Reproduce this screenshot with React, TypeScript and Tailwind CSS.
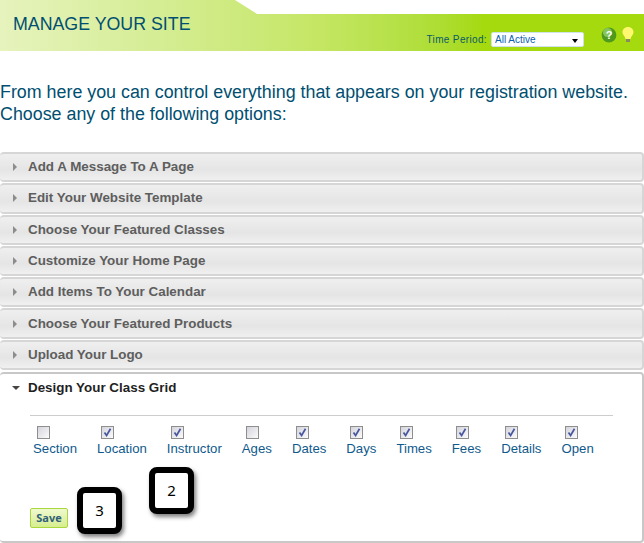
const sections = [
  "Add A Message To A Page",
  "Edit Your Website Template",
  "Choose Your Featured Classes",
  "Customize Your Home Page",
  "Add Items To Your Calendar",
  "Choose Your Featured Products",
  "Upload Your Logo",
]

const columns = [
  { name: "Section", on: false },
  { name: "Location", on: true },
  { name: "Instructor", on: true },
  { name: "Ages", on: false },
  { name: "Dates", on: true },
  { name: "Days", on: true },
  { name: "Times", on: true },
  { name: "Fees", on: true },
  { name: "Details", on: true },
  { name: "Open", on: true },
]

function Box({ on }: { on: boolean }) {
  return (
    <span className="ml-[4px] flex h-[13px] w-[13px] items-center justify-center border border-[#8e8e8e] bg-gradient-to-br from-[#d4d4dc] to-[#fbfbfb]">
      {on && (
        <svg width="9" height="9" viewBox="0 0 9 9">
          <path d="M1.5 4.5 L3.6 7.5 L7.5 0.8" fill="none" stroke="#47579e" strokeWidth="1.7" />
        </svg>
      )}
    </span>
  )
}

function Callout({ label, className }: { label: string; className: string }) {
  return (
    <div
      className={`absolute flex items-center justify-center rounded-[8px] border-[6px] border-black bg-white font-['Noto_Sans',sans-serif] text-[15px] text-black shadow-[2px_3px_4px_rgba(0,0,0,0.5)] ${className}`}
    >
      {label}
    </div>
  )
}

export default function App() {
  return (
    <div className="relative h-[543px] w-[644px] overflow-hidden bg-white font-['Liberation_Sans',sans-serif]">
      {/* Green title band with the notched tab */}
      <div className="flex h-[51px] items-end bg-gradient-to-r from-[#e6f3bd] via-[#c4e662] via-50% to-[#a5da0e] to-75% [clip-path:polygon(0_0,235px_0,257px_14px,100%_14px,100%_100%,0_100%)]">
        <h1 className="mb-[15px] ml-[13px] text-[17.8px] leading-[24px] text-[#004f71]">MANAGE YOUR SITE</h1>
        <div className="mb-[4px] ml-auto flex items-end">
          <span className="text-[10px] leading-[15px] tracking-[0.35px] text-[#0a5a66]">Time Period:</span>
          <div className="ml-[4px] flex h-[15px] w-[93px] items-center justify-between rounded-[2px] border border-[#cfe3e8] bg-white pl-[3px] pr-[5px] text-[10px] text-[#0a5fb0]">
            All Active
            <span className="mt-[3px] h-0 w-0 border-x-[3.5px] border-t-[4px] border-x-transparent border-t-black" />
          </div>
          <svg className="mb-[4px] ml-[17px]" width="16" height="16" viewBox="0 0 16 16">
            <circle cx="8" cy="8" r="7.4" fill="#4f9a1c" />
            <circle cx="6.5" cy="5.5" r="4.5" fill="#86c55a" />
            <text x="8" y="12" textAnchor="middle" fontSize="11" fontWeight="bold" fill="#fff">?</text>
          </svg>
          <svg className="mb-[3px] ml-[4px] mr-[9px]" width="14" height="18" viewBox="0 0 14 18">
            <path d="M7 1 C3.5 1 1.5 3.5 1.5 6.3 C1.5 8.8 4 10.3 4.5 13 H9.5 C10 10.3 12.5 8.8 12.5 6.3 C12.5 3.5 10.5 1 7 1 Z" fill="#fdf870" />
            <rect x="5" y="13" width="4" height="3" fill="#8a8a60" />
          </svg>
        </div>
      </div>

      <p className="mt-[30px] text-[17.85px] leading-[22px] text-[#004f71]">
        From here you can control everything that appears on your registration website.
        <br />
        Choose any of the following options:
      </p>

      <div className="mt-[27px] flex flex-col gap-[1px]">
        {sections.map((title) => (
          <div
            key={title}
            className="flex h-[30.3px] items-center rounded-[4px] border-y-2 border-r-2 border-[#d6d6d6] bg-gradient-to-b from-[#efefef] via-[#e5e5e5] via-60% to-[#f0f0f0]"
          >
            <span className="ml-[13px] h-0 w-0 border-y-[4px] border-l-[4px] border-y-transparent border-l-[#8c8c8c]" />
            <span className="ml-[11px] text-[13.4px] font-bold text-[#5e5e5e]">{title}</span>
          </div>
        ))}

        <div className="mt-[1px] h-[171px] rounded-[4px] border-y-2 border-r-2 border-[#c8c8c8] bg-white">
          <div className="flex h-[28px] items-center">
            <span className="ml-[12px] h-0 w-0 border-x-[4px] border-t-[4px] border-x-transparent border-t-[#444]" />
            <span className="ml-[8px] text-[13.4px] font-bold text-[#1f1f1f]">Design Your Class Grid</span>
          </div>
          <div className="ml-[30px] mt-[13px] w-[583px] border-t border-[#cccccc]" />
          <div className="ml-[33px] mt-[10px] flex gap-[20px]">
            {columns.map((c) => (
              <div key={c.name} className="flex flex-col items-start gap-[1px]">
                <Box on={c.on} />
                <span className="text-[13.2px] leading-[18px] text-[#0f5a8c]">{c.name}</span>
              </div>
            ))}
          </div>
          <button className="ml-[30px] mt-[50px] flex h-[20px] w-[38px] items-center justify-center rounded-[2px] border border-[#a8d83e] bg-gradient-to-b from-[#f0f8d0] to-[#d6ee8e] font-['Open_Sans',sans-serif] text-[11px] font-bold text-[#30607a]">
            Save
          </button>
        </div>
      </div>

      <Callout label="2" className="left-[149px] top-[467px] h-[47px] w-[45px]" />
      <Callout label="3" className="left-[77px] top-[487px] h-[47px] w-[45px]" />
    </div>
  )
}
